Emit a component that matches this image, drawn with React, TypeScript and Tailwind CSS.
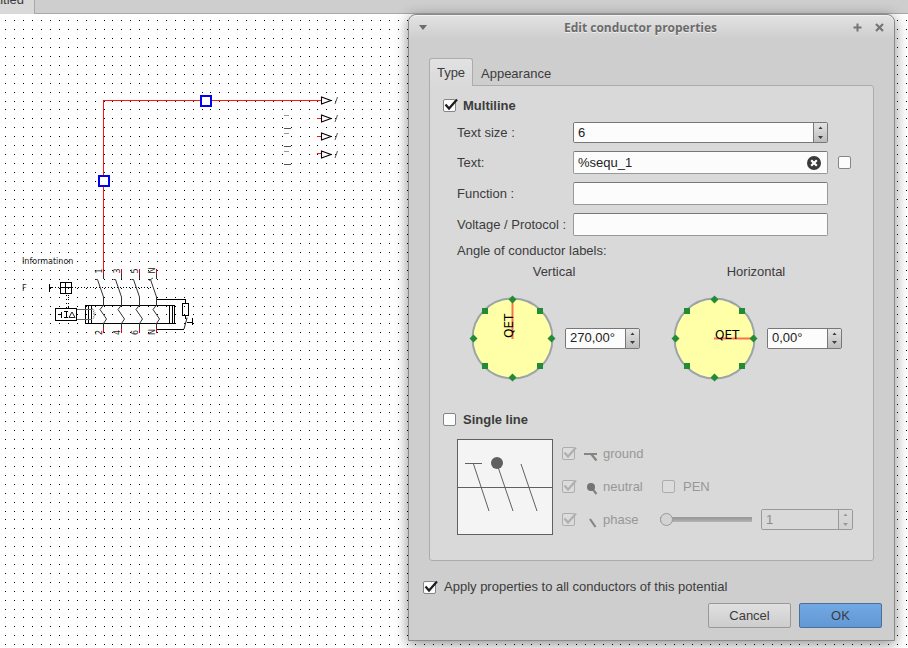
import React, { useState } from 'react';
import type { ReactNode } from 'react';

const POLES = [
  { x: 103.5, top: '1', bottom: '2' },
  { x: 121.5, top: '3', bottom: '4' },
  { x: 139.5, top: '5', bottom: '6' },
  { x: 156.5, top: 'N', bottom: 'N' },
];

function gridPath(width: number, height: number) {
  const step = 8.913;
  let d = '';
  for (let y = 20.8; y < height; y += step) {
    for (let x = 5.965; x < width; x += step) {
      d += `M${Math.floor(x)} ${Math.floor(y)}h1v1h-1z`;
    }
  }
  return d;
}

const GRID = gridPath(2400, 1500);

function Schematic() {
  return (
    <svg className="absolute inset-0 size-full" aria-label="Schematic">
      <path d={GRID} fill="#000" shapeRendering="crispEdges" />

      <g fill="none" stroke="#ff1414" strokeWidth="1" shapeRendering="crispEdges">
        <path d="M103.5 270V100.5H321" />
        <path d="M317 118.5h5M317 136.5h5M317 153.5h5" />
      </g>
      <g fill="#fff" stroke="#0000f5" strokeWidth="2" shapeRendering="crispEdges">
        <rect x="201" y="96" width="10" height="10" />
        <rect x="99" y="176" width="10" height="10" />
      </g>

      {[100.5, 118.5, 136.5, 154.5].map((y) => (
        <g key={y} fill="none" stroke="#000">
          <path d={`M321.5 ${y - 3.5}v7L331 ${y}zM331 ${y}h1`} fill="#fff" strokeWidth="1.1" />
          <path d={`M335 ${y + 3.5}l2.500-7`} stroke="#555" />
        </g>
      ))}
      <g stroke="#999" shapeRendering="crispEdges">
        <path d="M284 115.500h5M284 133.500h5M284 151.500h5" />
        <path d="M284 128.500h7M284 146.500h7M284 164.500h7" stroke="#555" />
      </g>

      <g fill="#222" fontFamily='"DejaVu Sans", sans-serif' fontSize="8">
        <text x="22" y="264">Informatinon</text>
        <text x="22" y="291">F</text>
        {POLES.map((p) => (
          <g key={p.x}>
            <text transform={`translate(${p.x - 2} 273.500) rotate(-90)`}>{p.top}</text>
            <text transform={`translate(${p.x - 2} 335) rotate(-90)`}>{p.bottom}</text>
          </g>
        ))}
      </g>

      <g fill="none" stroke="#000" shapeRendering="crispEdges">
        <path d="M49.500 284v8M50 287.500h2" />
        <path d="M52 287.500h8M72 287.500h79" strokeDasharray="1 2" />
        <path d="M66.500 295v13M68.500 295v13" strokeDasharray="1 3" />
        <path d="M60.500 282.500h11v11h-11zM65.500 282v11M60 287.500h11" />
        <path d="M55.500 308.500h21v12h-21z" fill="#fff" />
        <path d="M58 314.500h4M61.500 312v6M64 311.500h4M64 317.500h4M66.500 311v7" />
        <path d="M85.500 305.500h89v18h-89zM88.500 305v18M91.500 305v18M169.500 305v18M172.500 305v18" />
        <path d="M77 309.500h15M77 319.500h15" stroke="#666" />
        <path d="M157 299.500h28.500v4M182.500 303.500h6v12h-6zM185.500 316v3M157 329.500h27M187 322.500h6M192.500 318v7" />
      </g>
      <g fill="none" stroke="#222" strokeWidth="1">
        <path d="M69 317.500l3-5.500 3 5.500z" />
        <path d="M92 309q4 1 1 2.500q4 1 0 2.500q4 1 0 2.500q3 1-1 2.500" stroke="#555" strokeDasharray="1 1" />
        <path d="M187 318l-3 11" />
        <path d="M149 280.500l4-2.500M186.500 318h1" stroke="#555" />
      </g>
      {POLES.map((p) => (
        <g key={p.x} fill="none" stroke="#333">
          <path d={`M${p.x} 269v5M${p.x} 328v5`} stroke="#e00000" shapeRendering="crispEdges" />
          <path d={`M${p.x} 274v5M${p.x} 297v9M${p.x} 323v5`} shapeRendering="crispEdges" />
          <path d={`M${p.x - 8} 279.500h2L${p.x} 297`} />
          <path d={`M${p.x} 305l-3.500 4.500 6.500 9.500-3 4.500`} />
        </g>
      ))}
    </svg>
  );
}

type CheckProps = { label?: ReactNode; name?: string; checked?: boolean; disabled?: boolean; bold?: boolean; className?: string };

function Check({ label, name, checked = false, disabled, bold, className = '' }: CheckProps) {
  const [on, setOn] = useState(checked);
  return (
    <label className={`flex items-center ${bold ? 'gap-[7px] font-bold' : 'gap-2'} ${disabled ? 'text-[#979797]' : ''} ${className}`}>
      <span className="relative size-[13px] shrink-0">
        <input
          type="checkbox"
          aria-label={name}
          checked={on}
          disabled={disabled}
          onChange={(e) => setOn(e.target.checked)}
          className="block size-[13px] appearance-none rounded-[2px] border border-[#858585] bg-[#fcfcfc] disabled:border-[#adadad] disabled:bg-[#dcdcdc]"
        />
        {on && (
          <svg className="pointer-events-none absolute left-0 -top-px" width="16" height="14" viewBox="0 0 16 14" fill="none">
            <path d="M2.500 6.500L6 10.500 14 1.500" stroke={disabled ? '#b0b0b0' : '#1c1c1c'} strokeWidth="2.200" />
          </svg>
        )}
      </span>
      {label && <span>{label}</span>}
    </label>
  );
}

function Spin({ id, label, value, disabled, className }: { id: string; label?: string; value: string; disabled?: boolean; className: string }) {
  const arrow = disabled ? '#979797' : '#3c3c3c';
  return (
    <div className={`flex h-[21px] overflow-hidden rounded-[2px] border ${disabled ? 'border-[#999]' : 'border-[#777]'} ${className}`}>
      <input
        id={id}
        aria-label={label}
        defaultValue={value}
        disabled={disabled}
        className="min-w-0 flex-1 bg-[#fcfcfc] px-1 text-[#222] outline-none disabled:bg-[#d9d9d9] disabled:text-[#8c8c8c]"
      />
      <div className={`flex w-[14px] flex-col border-l bg-linear-to-b ${disabled ? 'border-[#999] from-[#d9d9d9] to-[#d2d2d2]' : 'border-[#777] from-[#e4e4e4] to-[#bdbdbd]'}`}>
        <button type="button" aria-label="Increase" disabled={disabled} className="flex flex-1 items-center justify-center">
          <svg width="5" height="3" viewBox="0 0 5 3"><path d="M.5 3L2.500 .500 4.500 3z" fill={arrow} /></svg>
        </button>
        <button type="button" aria-label="Decrease" disabled={disabled} className="flex flex-1 items-center justify-center">
          <svg width="5" height="3" viewBox="0 0 5 3"><path d="M0 0L2.500 3 5 0z" fill={arrow} /></svg>
        </button>
      </div>
    </div>
  );
}

const FIELD = 'rounded-[2px] border border-[#999] border-t-[#777] bg-[#fcfcfc]';

function Dial({ title, id, value, angle }: { title: string; id: string; value: string; angle: number }) {
  return (
    <div className="flex flex-col items-center">
      <label htmlFor={id} className="h-5 leading-5">{title}</label>
      <div className="mt-3 flex items-center gap-[9px]">
        <svg width="88" height="88" viewBox="0 0 88 88" aria-hidden="true">
          <circle cx="44.500" cy="44.500" r="40" fill="#ffffa8" stroke="#9ba5a9" strokeWidth="2" />
          <g transform={`rotate(${angle} 44.500 44.500)`}>
            <path d="M44 44.500h38" stroke="#ff7050" strokeWidth="2" />
            <text x="45" y="44.500" fontFamily='"DejaVu Sans", sans-serif' fontSize="12" fill="#000">QET</text>
          </g>
          <g fill="#228b35">
            <path d="M44.500 1.500l4 4-4 4-4-4zM44.500 79.500l4 4-4 4-4-4zM5.500 40.500l4 4-4 4-4-4zM83.500 40.500l4 4-4 4-4-4z" />
            <path d="M14 14h6v6h-6zM69 14h6v6h-6zM14 69h6v6h-6zM69 69h6v6h-6z" />
          </g>
        </svg>
        <Spin id={id} value={value} className="w-[75px]" />
      </div>
    </div>
  );
}

function WireLabel({ kind }: { kind: 'ground' | 'neutral' | 'phase' }) {
  return (
    <span className="flex items-center gap-[5px]">
      <svg width="15" height="16" viewBox="0 0 15 16" fill="none" stroke="#858585" strokeWidth="2.200">
        {kind === 'ground' && <path d="M1 8h13M8.500 8.500l5 6" />}
        {kind === 'neutral' && <path d="M8 8l5.500 7" />}
        {kind === 'neutral' && <circle cx="8" cy="8" r="4" fill="#747474" stroke="none" />}
        {kind === 'phase' && <path d="M7 7l5.500 8" />}
      </svg>
      {kind}
    </span>
  );
}

function SingleLinePreview() {
  return (
    <svg width="96" height="96" viewBox="0 0 96 96" className="mt-0.5 shrink-0" aria-label="Single line preview">
      <rect x=".5" y=".5" width="95" height="95" fill="#f4f4f4" stroke="#606060" />
      <g stroke="#606060" fill="none">
        <path d="M0 48.500h96M8 24.500h17" shapeRendering="crispEdges" />
        <path d="M16.500 25L32 72M40 25l16 47M64 25l16 47" />
      </g>
      <circle cx="40" cy="24" r="6" fill="#606060" />
    </svg>
  );
}

function PropertiesDialog() {
  return (
    <section
      role="dialog"
      aria-labelledby="dialog-title"
      className="absolute left-[408px] top-[14px] w-[487px] rounded-t-lg border border-[#8a8a8a] bg-[#cecece] pb-3 shadow-[0_3px_14px_rgba(0,0,0,0.45)]"
    >
      <header className="grid h-[24px] grid-cols-[80px_1fr_102px] items-center rounded-t-lg border-t border-[#f2f2f2] bg-linear-to-b from-[#e2e2e2] to-[#cecece]">
        <button type="button" aria-label="Window menu" className="ml-[10px] w-2">
          <svg width="8" height="5" viewBox="0 0 8 5"><path d="M0 0h8L4 5z" fill="#6b6b6b" /></svg>
        </button>
        <h2 id="dialog-title" className="text-center font-['Open_Sans',sans-serif] text-[12px] leading-[16px] font-bold text-[#6b6b6b] [text-shadow:0_1px_0_#eee]">
          Edit conductor properties
        </h2>
        <div className="flex justify-end gap-[13px] pr-[10px]">
          <button type="button" aria-label="Maximize">
            <svg width="9" height="9" viewBox="0 0 9 9"><path d="M4.500 .5v8M.5 4.500h8" stroke="#757575" strokeWidth="2" /></svg>
          </button>
          <button type="button" aria-label="Close">
            <svg width="9" height="9" viewBox="0 0 9 9"><path d="M1 1l7 7M8 1L1 8" stroke="#757575" strokeWidth="2.200" /></svg>
          </button>
        </div>
      </header>

      <div className="px-5 pt-[19px]">
        <div role="tablist" className="-mb-px flex h-7">
          <button type="button" role="tab" aria-selected="true" className="relative w-[44px] rounded-t-[3px] border border-b-0 border-[#acacac] bg-linear-to-b from-[#e2e2e2] to-[#d9d9d9]">
            Type
          </button>
          <button type="button" role="tab" aria-selected="false" className="px-2 pt-1">
            Appearance
          </button>
        </div>

        <div role="tabpanel" className="rounded-b-[3px] rounded-tr-[3px] border border-[#acacac] bg-[#d9d9d9] pt-[10px] pr-[14px] pb-6 pl-[13px]">
          <Check label="Multiline" checked bold className="h-[19px] w-fit" />

          <div className="mt-[7px] ml-[14px] flex flex-col gap-2">
            <div className="flex items-center">
              <label htmlFor="text-size" className="w-[116px]">Text size :</label>
              <Spin id="text-size" value="6" className="w-[255px]" />
            </div>
            <div className="flex items-center">
              <label htmlFor="text" className="w-[116px]">Text:</label>
              <div className={`flex h-[23px] w-[255px] items-center pr-[6px] ${FIELD}`}>
                <input id="text" defaultValue="%sequ_1" className="min-w-0 flex-1 bg-transparent px-1 text-[#222] outline-none" />
                <button type="button" aria-label="Clear text">
                  <svg width="14" height="14" viewBox="0 0 14 14">
                    <circle cx="7" cy="7" r="7" fill="#3a3a3a" />
                    <path d="M4.200 4.200l5.600 5.600M9.800 4.200L4.200 9.800" stroke="#fff" strokeWidth="2.200" />
                  </svg>
                </button>
              </div>
              <Check name="Show text" className="ml-[10px]" />
            </div>
            <div className="flex items-center">
              <label htmlFor="function" className="w-[116px]">Function :</label>
              <input id="function" className={`h-[23px] w-[255px] px-1 ${FIELD}`} />
            </div>
            <div className="flex items-center">
              <label htmlFor="voltage" className="w-[116px]">Voltage / Protocol :</label>
              <input id="voltage" className={`h-[23px] w-[255px] px-1 ${FIELD}`} />
            </div>
          </div>

          <p className="mt-[5px] ml-[14px] leading-5">Angle of conductor labels:</p>
          <div className="mt-px ml-[25px] flex gap-[30px]">
            <Dial title="Vertical" id="vertical-angle" value="270,00°" angle={-90} />
            <Dial title="Horizontal" id="horizontal-angle" value="0,00°" angle={0} />
          </div>

          <Check label="Single line" bold className="mt-7 h-[19px] w-fit" />
          <div className="mt-2 ml-[14px] flex items-start">
            <SingleLinePreview />
            <div className="ml-[9px] grid auto-rows-[33px] grid-cols-[100px_99px_92px] items-center">
              <Check label={<WireLabel kind="ground" />} checked disabled />
              <span className="col-span-2" />
              <Check label={<WireLabel kind="neutral" />} checked disabled />
              <Check label="PEN" disabled />
              <span />
              <Check label={<WireLabel kind="phase" />} checked disabled />
              <input
                type="range"
                aria-label="Phase count"
                min="1"
                max="3"
                defaultValue="1"
                disabled
                className="-ml-0.5 h-[13px] w-[92px] appearance-none bg-[linear-gradient(#999,#999_20%,#b4b4b4)] bg-size-[100%_5px] bg-center bg-no-repeat [&::-webkit-slider-thumb]:size-[13px] [&::-webkit-slider-thumb]:appearance-none [&::-webkit-slider-thumb]:rounded-full [&::-webkit-slider-thumb]:border [&::-webkit-slider-thumb]:border-[#999] [&::-webkit-slider-thumb]:bg-[#d3d3d3]"
              />
              <Spin id="phase-count" label="Number of phases" value="1" disabled className="w-[92px]" />
            </div>
          </div>
        </div>
      </div>

      <Check label="Apply properties to all conductors of this potential" checked className="mt-4 ml-[14px] h-5 w-fit" />
      <footer className="mt-[6px] flex justify-end gap-2 pr-3">
        <button type="button" className="h-[25px] w-[83px] rounded-[2px] border border-[#999] bg-linear-to-b from-[#e0e0e0] to-[#cdcdcd]">
          Cancel
        </button>
        <button type="button" className="h-[25px] w-[83px] rounded-[2px] border border-[#4a6f9a] bg-linear-to-b from-[#72a8e3] to-[#6199d6]">
          OK
        </button>
      </footer>
    </section>
  );
}

export default function App() {
  return (
    <div className="relative flex h-screen flex-col overflow-hidden bg-white font-['Liberation_Sans',Arial,sans-serif] text-[13px] leading-[16px] text-[#3c3c3c]">
      <Schematic />
      <nav role="tablist" className="relative flex h-[14px] border-b border-[#a8a8a8] bg-[#cecece]">
        <button type="button" role="tab" aria-selected="true" className="-mb-px flex w-[35px] items-end justify-end overflow-hidden border-r border-[#a8a8a8] bg-[#d9d9d9] pr-[10px] pb-[6px] whitespace-nowrap">
          Untitled
        </button>
      </nav>
      <PropertiesDialog />
    </div>
  );
}
